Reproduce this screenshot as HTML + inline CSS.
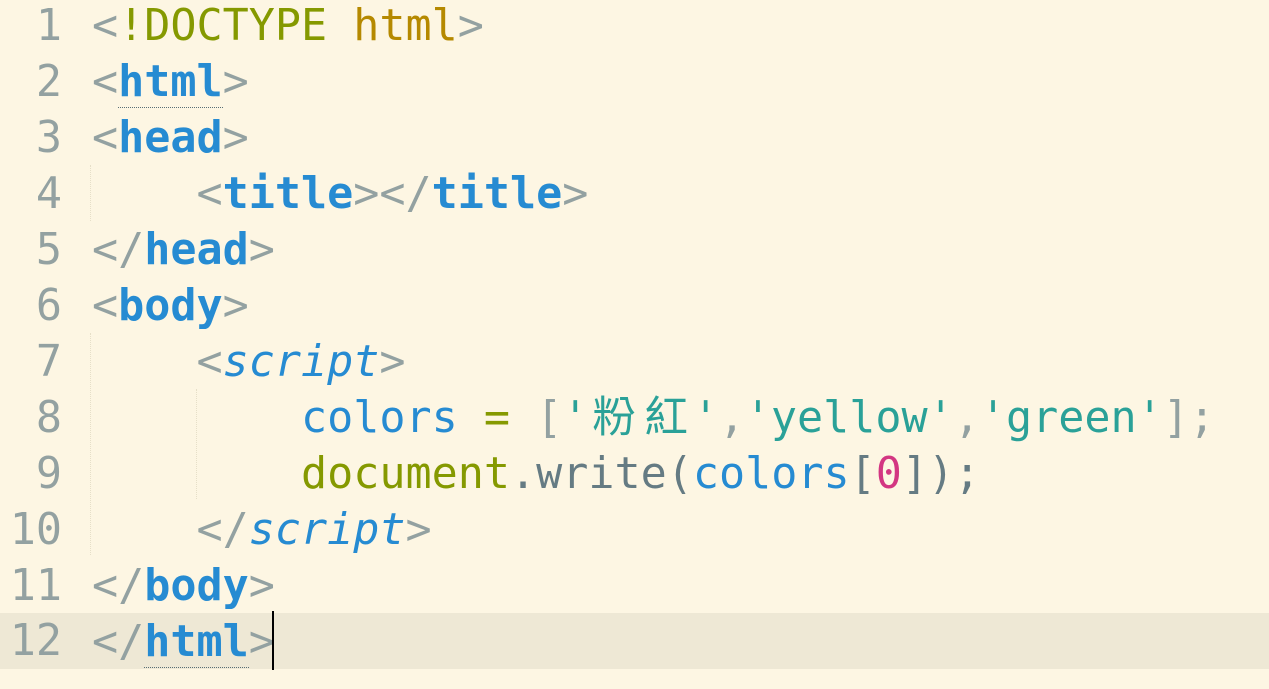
<!DOCTYPE html>
<html><head><style>
body{margin:0;background:#fdf6e3;width:1269px;height:689px;overflow:hidden;position:relative;font-family:"DejaVu Sans Mono","Liberation Mono","Noto Sans CJK TC",monospace;font-size:43.4px;}
.l{position:absolute;left:0;width:1269px;height:56px;line-height:56px;white-space:pre;}
.n{position:absolute;right:1207px;color:#93a1a1;}
.c{position:absolute;left:92px;color:#657b83;}
.p{color:#93a1a1}.t{color:#268bd2;font-weight:bold}.i{color:#268bd2;font-style:italic}
.b{color:#268bd2}.g{color:#859900}.y{color:#b58900}.s{color:#2aa198}.m{color:#d33682}
.cj{font-family:"Noto Sans CJK TC",sans-serif;letter-spacing:8.7px;margin-left:4px;margin-right:-4px;line-height:0;}
.cur{background:#eee8d5}
.u{border-bottom:1px dotted #586e75}
.g1{position:absolute;top:0;width:0;border-left:1px dotted #e6dfc8;}
</style></head><body>
<div class="g1" style="left:90px;top:165px;height:56px"></div>
<div class="g1" style="left:90px;top:333px;height:222px"></div>
<div class="g1" style="left:196px;top:389px;height:110px"></div>
<div class="l" style="top:-2px"><span class="n">1</span><span class="c"><span class="p">&lt;</span><span class="g">!DOCTYPE</span> <span class="y">html</span><span class="p">&gt;</span></span></div>
<div class="l" style="top:54px"><span class="n">2</span><span class="c"><span class="p">&lt;</span><span class="t u">html</span><span class="p">&gt;</span></span></div>
<div class="l" style="top:110px"><span class="n">3</span><span class="c"><span class="p">&lt;</span><span class="t">head</span><span class="p">&gt;</span></span></div>
<div class="l" style="top:166px"><span class="n">4</span><span class="c">    <span class="p">&lt;</span><span class="t">title</span><span class="p">&gt;&lt;/</span><span class="t">title</span><span class="p">&gt;</span></span></div>
<div class="l" style="top:222px"><span class="n">5</span><span class="c"><span class="p">&lt;/</span><span class="t">head</span><span class="p">&gt;</span></span></div>
<div class="l" style="top:278px"><span class="n">6</span><span class="c"><span class="p">&lt;</span><span class="t">body</span><span class="p">&gt;</span></span></div>
<div class="l" style="top:334px"><span class="n">7</span><span class="c">    <span class="p">&lt;</span><span class="i">script</span><span class="p">&gt;</span></span></div>
<div class="l" style="top:390px"><span class="n">8</span><span class="c">        <span class="b">colors</span> <span class="g">=</span> <span class="p">[</span><span class="s">'<span class="cj">粉紅</span>'</span><span class="p">,</span><span class="s">'yellow'</span><span class="p">,</span><span class="s">'green'</span><span class="p">];</span></span></div>
<div class="l" style="top:446px"><span class="n">9</span><span class="c">        <span class="g">document</span>.write(<span class="b">colors</span>[<span class="m">0</span>]);</span></div>
<div class="l" style="top:502px"><span class="n">10</span><span class="c">    <span class="p">&lt;/</span><span class="i">script</span><span class="p">&gt;</span></span></div>
<div class="l" style="top:558px"><span class="n">11</span><span class="c"><span class="p">&lt;/</span><span class="t">body</span><span class="p">&gt;</span></span></div>
<div class="l cur" style="top:613px"><span class="n">12</span><span class="c" style="top:1px"><span class="p">&lt;/</span><span class="t u">html</span><span class="p">&gt;</span></span></div>
<div style="position:absolute;left:272px;top:611px;width:2px;height:59px;background:#000"></div>
</body></html>
